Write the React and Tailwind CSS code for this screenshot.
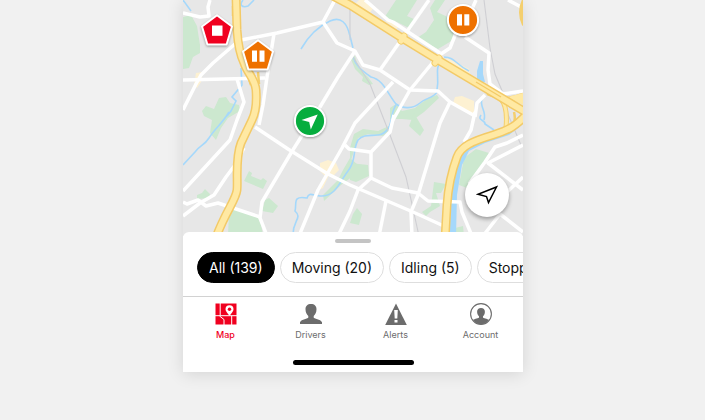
import { useState } from 'react'

const PARKS = [
    'M0 17 L8 15 L14 26 L17 45 L17 53 L10 57 L6 68 L0 69Z',
    'M19 111 L23 106 L31 109 L36 98 L43 97 L47 103 L56 105 L57 111 L45 118 L38 128 L33 140 L27 133 L29 120 L21 116Z',
    'M66 171 L69 173 L68 176 L78 180 L80 178 L84 181 L80 189 L61 181Z',
    'M14 195 L19 193 L22 189 L27 194 L26 198 L14 199Z',
    'M82 200 L86 198 L95 206 L90 213 L79 211Z',
    'M46 213 L51 209 L77 217 L80 236 L45 236Z',
    'M201 18 L213 0 L234 0 L224 16 L233 20 L228 29 L214 22Z',
    'M252 0 L262 0 L254 12 L271 20 L270 40 L255 49 L234 38 L243 32 L251 20 L247 8Z',
    'M167 57 L172 56 L175 67 L185 77 L190 84 L186 85 L179 81 L180 77 L172 69Z',
    'M207 108 L213 104 L219 111 L232 108 L245 98 L254 95 L256 98 L241 112 L230 120 L219 119 L207 119Z',
    'M167 148 L171 134 L180 129 L195 131 L206 126 L209 128 L200 136 L185 134 L175 138 L171 151 L167 163 L185 165 L186 176 L173 182 L167 180Z',
    'M140 195 L155 180 L160 170 L167 158 L175 165 L170 176 L158 185 L141 201Z',
    'M226 126 L231 113 L235 120 L241 130 L237 136Z',
    'M251 182 L263 184 L258 193 L253 193 L257 206 L247 212 L243 216 L239 212 L248 206Z',
    'M281 158 L293 149 L306 153 L299 165 L288 178 L284 188 L276 185Z',
    'M170 214 L174 208 L179 214 L176 225 L167 223Z',
    'M272 228 L280 226 L281 236 L272 236Z',
]

const SHOPS = [
    'M176 0 L184 0 L191 7 L186 14 L170 6Z',
    'M13 73 L20 72 L18 82 L14 88 L11 85Z',
    'M202 21 L209 20 L216 27 L213 29Z',
    'M264 58 L286 69 L287 75 L262 63Z',
    'M272 97 L279 96 L291 101 L291 115 L270 103Z',
    'M137 163 L145 160 L153 163 L156 170 L151 175 L146 175 L140 188 L136 190 L142 176 L137 171Z',
]

const STREAMS = [
    'M0 0 L8 11',
    'M60 0 C56 5 59 8 65 6 L71 0',
    'M58 68 L59 85 L49 97 L53 101 L48 111 L44 116',
    'M46 112 C39 124 32 128 26 138 C21 146 17 145 12 152 L0 165',
    'M118 49 C126 35 136 26 147 21 C158 16 164 23 167 36 L170 48',
    'M170 57 C173 66 178 70 188 77 C201 80 204 93 213 104 C220 109 230 109 237 103 C242 98 251 98 254 92',
    'M260 59 C250 70 257 72 254 90',
    'M261 57 C272 57 273 65 286 71',
    'M299 98 C296 107 304 111 301 120',
    'M213 105 C208 112 209 122 206 127 C198 142 184 130 175 140 C169 151 174 160 165 171 C157 181 153 197 137 196 C129 195 126 192 124 198 C109 195 114 204 112 211 C120 218 109 221 110 236',
    'M298 115 C294 121 302 119 302 124 L311 130',
]

const ROADS = [
    'M0 13 L17 17 L26 16 L25 7 L27 0',
    'M0 110 L13 84 L18 75 L30 63 L52 44',
    'M0 80 L82 78',
    'M58 40 L94 33 L140 22 L152 0',
    'M91 34 L84 77 L80 105 L76 125',
    'M140 22 L154 43 L172 51 L180 65 L197 70 L227 90 L255 91 L267 102 L292 116',
    'M172 51 L155 77 L137 107 L108 153 L79 202 L77 218 L84 236',
    'M54 79 L61 102 L54 120 L47 140 L0 191',
    'M72 127 L105 149 L145 174 L167 185 L230 212 L263 227',
    'M0 216 L17 203 L31 195 L43 177 L52 165 L61 148',
    'M0 202 L4 204 L15 200 L23 206 L35 203 L77 217',
    'M182 0 L205 20 L210 22 L257 53',
    'M246 0 L197 70',
    'M273 33 L267 48 L255 56 L227 90 L210 120',
    'M210 82 L172 123 L159 148 L135 190 L116 236',
    'M162 145 L166 149 L187 152',
    'M211 115 L207 132 L188 152 L188 178 L175 190 L167 211 L155 236',
    'M188 178 L209 188 L235 193 L245 201 L277 202 L279 212 L289 236',
    'M267 102 L257 123 L235 195 L228 212 L229 236',
    'M292 112 L288 130 L281 142',
    'M293 0 L285 18',
    'M282 37 L306 53 L305 70 L307 84 L320 94 L340 91',
    'M292 117 L294 103 L302 95',
    'M325 0 L340 8',
    'M203 201 L196 236',
    'M340 135 L324 143 L312 147 L302 162 L286 184',
    'M340 145 L305 163 L340 190',
    'M340 177 L322 194',
    'M300 236 L317 214 L340 232',
]

const HIGHWAYS = [
    'M53 -4 L54 30 C55 45 57 55 61 63 C64 73 72 78 73 90 C74 104 73 112 69 120 L58 143 C52 158 55 180 54 190 C53 200 42 212 32 240',
    'M148 -5 L167 5 L219 38 L255 60 L297 85 L344 113',
    'M344 114 C333 126 326 130 310 135 C290 141 278 146 274 157 C268 173 265 190 264 205 L262 240',
]

function Paths({ list, ...rest }) {
    return <g {...rest}>{list.map(d => <path key={d} d={d} />)}</g>
}

function StreetMap() {
    return (
        <svg viewBox="0 0 340 236" preserveAspectRatio="xMidYMid slice" className="block w-full" aria-hidden="true">
            <rect width="340" height="236" fill="#e7e7e7" />
            <Paths list={PARKS} fill="#cce8cf" />
            <Paths list={SHOPS} fill="#fdf1d2" />
            <path d="M294 71 L297 61 L300 61 L300 74 L302 82 L294 83Z" fill="#a5d8fb" />
            <path d="M340 124 L326 135 L302 143 L286 151 L279 165 L274 195 L273 236 L266 236 L269 190 L277 156 L290 143 L326 130Z" fill="#a5d8fb" />
            <Paths list={STREAMS} fill="none" stroke="#a5d8fb" strokeWidth="1.6" />

            {/* Rail lines */}
            <g fill="none" stroke="#cfcfd3" strokeWidth="1.1">
                <path d="M167 0 L167 40 M170 57 L187 84 L207 135 L223 177 L236 236" />
                <path d="M301 0 L307 48 L312 74 L320 93" />
                <path d="M324 112 L338 145" />
            </g>

            <Paths list={ROADS} fill="none" stroke="#fff" strokeWidth="3.5" strokeLinejoin="round" />

            {/* Ramps and interchanges */}
            <g fill="none" stroke="#f4cf6e" strokeWidth="2.5">
                <path d="M341 0 Q335 12 341 25" strokeWidth="4" />
                <path d="M50 6 L50 16 M65 76 L68 85 M75 72 L76 84" />
                <path d="M304 94 Q320 102 340 94 M330 99 L332 107 M326 129 Q334 124 331 112" />
                <path d="M318 99 Q325 107 323 128" strokeWidth="5" />
                <path d="M218 41 L221 36 M252 63 L256 58" strokeWidth="7" strokeLinecap="round" />
            </g>
            <path d="M325 97 L340 93 V105 L332 101Z" fill="#ffe9a3" />
            <path d="M318 99 Q325 107 323 128" fill="none" stroke="#ffe9a3" strokeWidth="3" />
            <Paths list={HIGHWAYS} fill="none" stroke="#f3ca67" strokeWidth="9" />
            <Paths list={HIGHWAYS} fill="none" stroke="#ffe9a3" strokeWidth="6" />
            <path d="M218 41 L221 36 M252 63 L256 58" stroke="#ffe9a3" strokeWidth="5" strokeLinecap="round" />
            <path d="M293 82 L318 97" stroke="#f3ca67" strokeWidth="1.2" />
        </svg>
    )
}

function PentagonMarker({ color, children }) {
    return (
        <svg viewBox="0 0 34 34" className="size-full drop-shadow-[0_1px_1px_rgba(0,0,0,0.35)]" aria-hidden="true">
            <path d="M17 2.200 L32 13.500 L26.600 31.500 H7.400 L2 13.500Z" fill={color} stroke="#fff" strokeWidth="2" strokeLinejoin="round" />
            {children}
        </svg>
    )
}

function RoundMarker({ color, children }) {
    return (
        <svg viewBox="0 0 34 34" className="size-full drop-shadow-[0_1px_1px_rgba(0,0,0,0.35)]" aria-hidden="true">
            <circle cx="17" cy="17" r="15.1" fill={color} stroke="#fff" strokeWidth="2" />
            {children}
        </svg>
    )
}

function MapIcon() {
    return (
        <svg viewBox="0 0 22 22" className="size-[22px]" aria-hidden="true">
            <path d="M.5 .5H21.500V21.500H.5Z" fill="#f0001f" />
            <path d="M5.200 0V12.700M0 12.700H22M4.500 13L9 16.500V22M16.700 13V22" fill="none" stroke="#fff" strokeWidth="1" />
            <path d="M14.500 12.700C12.500 10 10.500 8.500 10.500 6.200a4 4 0 0 1 8 0C18.500 8.500 16.500 10 14.500 12.700Z" fill="#fff" />
            <circle cx="14.500" cy="6.200" r="1.700" fill="#f0001f" />
        </svg>
    )
}

function DriversIcon() {
    return (
        <svg viewBox="0 0 22 22" className="size-[22px]" fill="currentColor" aria-hidden="true">
            <path d="M11 1c3.500 0 5.500 2 5.500 5.300 0 3-1.300 5.400-2.800 6.700v1.500c0 1.200 7 1.700 8.300 4.700V21H0v-1.800c1.300-3 8.300-3.500 8.300-4.700V13C6.800 11.700 5.500 9.300 5.500 6.300 5.500 3 7.500 1 11 1Z" />
        </svg>
    )
}

function AlertsIcon() {
    return (
        <svg viewBox="0 0 22 22" className="size-[22px]" aria-hidden="true">
            <path d="M11 .5L21.800 22H.2Z" fill="currentColor" />
            <path d="M9.200 7h3.600l-.5 8.500H9.700ZM9.500 17h3v2.500h-3Z" fill="#fff" />
        </svg>
    )
}

function AccountIcon() {
    return (
        <svg viewBox="0 0 22 22" className="size-[22px]" aria-hidden="true">
            <circle cx="11" cy="11" r="10.400" fill="#fff" stroke="currentColor" strokeWidth="1.100" />
            <path d="M11 5c2.500 0 3.900 1.400 3.900 3.700 0 2-.9 3.500-1.900 4.500v1.200c0 .9 4.500 1 6 2.600C17.200 19.700 14.300 21.200 11 21.200S4.800 19.700 3 17c1.500-1.600 6-1.700 6-2.600v-1.200c-1-1-1.900-2.500-1.900-4.500C7.100 6.400 8.500 5 11 5Z" fill="currentColor" />
        </svg>
    )
}

const MARKERS = [
    {
        id: 'stopped',
        label: 'Stopped vehicle',
        place: 'left-[17px] top-[13px]',
        icon: (
            <PentagonMarker color="#f0001f">
                <path d="M12 12.500H22.500V22.800H12Z" fill="#fff" />
            </PentagonMarker>
        ),
    },
    {
        id: 'idling-1',
        label: 'Idling vehicle',
        place: 'left-[58px] top-[38px]',
        icon: (
            <PentagonMarker color="#ee7100">
                <path d="M11 12.500H16V23.800H11ZM18.500 12.500H23.500V23.800H18.500Z" fill="#fff" />
            </PentagonMarker>
        ),
    },
    {
        id: 'idling-2',
        label: 'Idling vehicle',
        place: 'left-[263px] top-[3px]',
        icon: (
            <RoundMarker color="#ee7100">
                <path d="M11 11.300H16V22.500H11ZM18.300 11.300H23.300V22.500H18.300Z" fill="#fff" />
            </RoundMarker>
        ),
    },
    {
        id: 'moving',
        label: 'Moving vehicle',
        place: 'left-[110px] top-[104px]',
        icon: (
            <RoundMarker color="#06ad3e">
                <path d="M24.700 10.500L17.800 25.500L16.200 18L8.500 16Z" fill="#fff" />
            </RoundMarker>
        ),
    },
]

const FILTERS = ['All (139)', 'Moving (20)', 'Idling (5)', 'Stopped (114)']

const TABS = [
    { label: 'Map', Icon: MapIcon },
    { label: 'Drivers', Icon: DriversIcon },
    { label: 'Alerts', Icon: AlertsIcon },
    { label: 'Account', Icon: AccountIcon },
]

export default function App() {
    const [filter, setFilter] = useState(FILTERS[0])

    return (
        <div className="flex min-h-screen items-start justify-center bg-[#f1f1f1] pl-px font-['Inter','Liberation_Sans',sans-serif]">
            <main className="w-full max-w-[340px] bg-white shadow-[0_2px_16px_rgba(0,0,0,0.12)]">
                <div className="relative">
                    <StreetMap />
                    {MARKERS.map(m => (
                        <button key={m.id} type="button" aria-label={m.label} className={`absolute size-[34px] ${m.place}`}>
                            {m.icon}
                        </button>
                    ))}
                    <button
                        type="button"
                        aria-label="My location"
                        className="absolute right-[14px] bottom-[19px] flex size-11 items-center justify-center rounded-full bg-white shadow-[0_2px_4px_rgba(0,0,0,0.35)]"
                    >
                        <svg viewBox="0 0 22 20" className="h-5 w-[22px]" fill="none" stroke="#000" strokeWidth="1.500" aria-hidden="true">
                            <path d="M20.500 2L12.500 17.500L10.500 11.500L2 9.200Z" />
                        </svg>
                    </button>
                </div>

                {/* Bottom sheet, pulled over the map's lower edge */}
                <section className="relative -mt-1 rounded-t-md bg-white pt-[7px]">
                    <div className="mx-auto h-1 w-9 rounded-full bg-[#c4c4c4]" />
                    <div className="mt-[9px] flex gap-[5px] overflow-hidden pl-[14px]">
                        {FILTERS.map(f => (
                            <button
                                key={f}
                                type="button"
                                onClick={() => setFilter(f)}
                                className={`h-[31px] shrink-0 rounded-full border px-[11px] text-[14px] leading-5 ${f === filter ? 'border-black bg-black text-white' : 'border-[#dedede] bg-white text-[#111]'}`}
                            >
                                {f}
                            </button>
                        ))}
                    </div>
                </section>

                <nav className="mt-[13px] grid grid-cols-4 border-t border-[#d2d2d2] pt-[6px]">
                    {TABS.map(({ label, Icon }, i) => (
                        <a
                            key={label}
                            href={`#${label.toLowerCase()}`}
                            className={`flex flex-col items-center gap-1 text-[9px] leading-3 ${i === 0 ? 'font-medium text-[#f0001f]' : 'text-[#6c6c6c]'}`}
                        >
                            <Icon />
                            {label}
                        </a>
                    ))}
                </nav>
                <div className="flex justify-center pt-[19px] pb-[7px]">
                    <div className="h-[5px] w-[121px] rounded-full bg-black" />
                </div>
            </main>
        </div>
    )
}
